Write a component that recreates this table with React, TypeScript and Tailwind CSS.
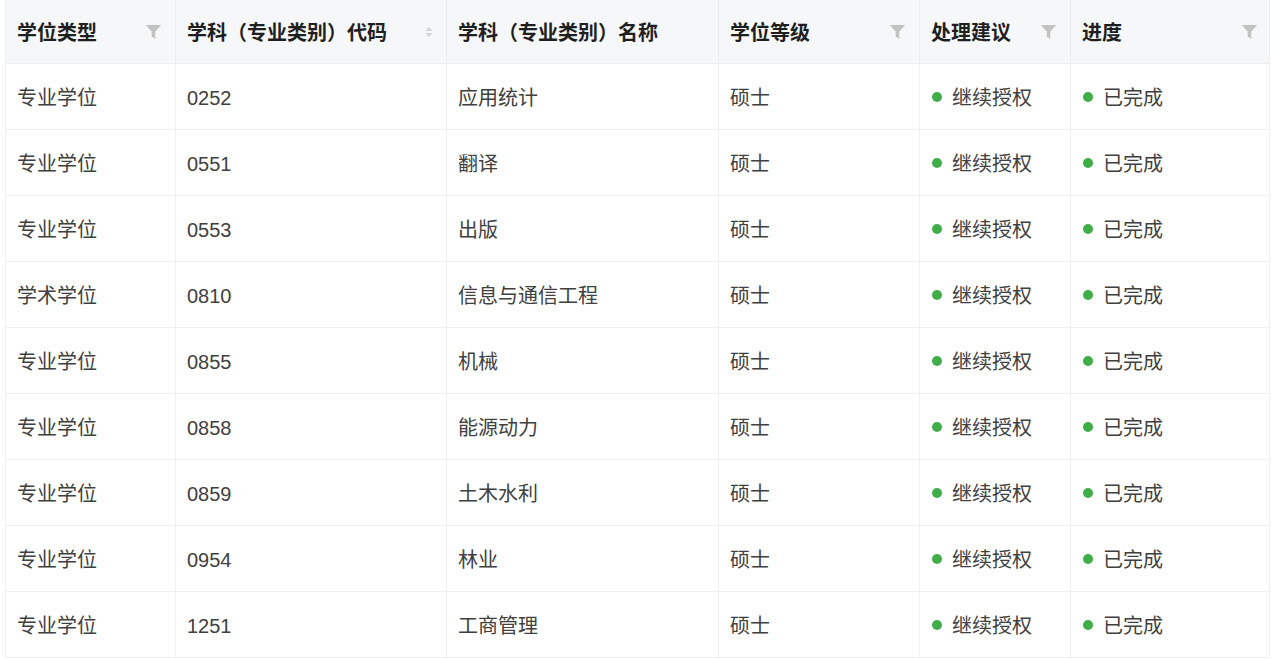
import React from "react";

const rows = [
  ["专业学位", "0252", "应用统计"],
  ["专业学位", "0551", "翻译"],
  ["专业学位", "0553", "出版"],
  ["学术学位", "0810", "信息与通信工程"],
  ["专业学位", "0855", "机械"],
  ["专业学位", "0858", "能源动力"],
  ["专业学位", "0859", "土木水利"],
  ["专业学位", "0954", "林业"],
  ["专业学位", "1251", "工商管理"],
];

const Filter = () => (
  <svg width="19" height="19" viewBox="0 0 16 16" className="shrink-0">
    <path d="M1.5 2.5h13l-5 5.5v6l-3-1.5V8z" fill="#c2c2c2" />
  </svg>
);

const Sort = () => (
  <svg width="10" height="14" viewBox="0 0 10 14" className="shrink-0">
    <path d="M5 2l3.5 4h-7z" fill="#d4d4d4" />
    <path d="M5 12l3.5-4h-7z" fill="#d4d4d4" />
  </svg>
);

const Dot = () => <span className="w-[10px] h-[10px] rounded-full bg-[#3fae49] mr-[10px] shrink-0" />;

const cols = "grid-cols-[170px_271px_272px_201px_151px_200px]";

export default function App() {
  const headers: [string, React.ReactNode][] = [
    ["学位类型", <Filter />],
    ["学科（专业类别）代码", <Sort />],
    ["学科（专业类别）名称", null],
    ["学位等级", <Filter />],
    ["处理建议", <Filter />],
    ["进度", <Filter />],
  ];
  return (
    <div
      className="w-[1272px] h-[660px] bg-white pl-[5px] pr-[2px] overflow-hidden"
      style={{ fontFamily: '"Noto Sans CJK SC", "Noto Sans", sans-serif' }}
    >
      <div className="border-l border-r border-[#f0f0f0] w-[1265px]">
        <div className={`grid ${cols} bg-[#f6f7f8] h-[64px] border-b border-[#eeeeee]`}>
          {headers.map(([h, icon], i) => (
            <div
              key={i}
              className={`flex items-center justify-between pl-[11px] pr-[12px] text-[20px] font-bold text-[#1f1f1f] ${
                i < 5 ? "border-r border-[#ededed]" : ""
              }`}
            >
              <span>{h}</span>
              {icon}
            </div>
          ))}
        </div>
        {rows.map((r, ri) => (
          <div key={ri} className={`grid ${cols} h-[66px] border-b border-[#f0f0f0] text-[20px] text-[#404040]`}>
            <div className="flex items-center pl-[11px] border-r border-[#f0f0f0]">{r[0]}</div>
            <div className="flex items-center pl-[11px] border-r border-[#f0f0f0]" style={{ fontFamily: '"Liberation Sans", "Noto Sans CJK SC", sans-serif' }}>
              <span className="pt-[2px]">{r[1]}</span>
            </div>
            <div className="flex items-center pl-[11px] border-r border-[#f0f0f0]">{r[2]}</div>
            <div className="flex items-center pl-[11px] border-r border-[#f0f0f0]">硕士</div>
            <div className="flex items-center pl-[12px] border-r border-[#f0f0f0]">
              <Dot />
              继续授权
            </div>
            <div className="flex items-center pl-[12px]">
              <Dot />
              已完成
            </div>
          </div>
        ))}
      </div>
    </div>
  );
}
